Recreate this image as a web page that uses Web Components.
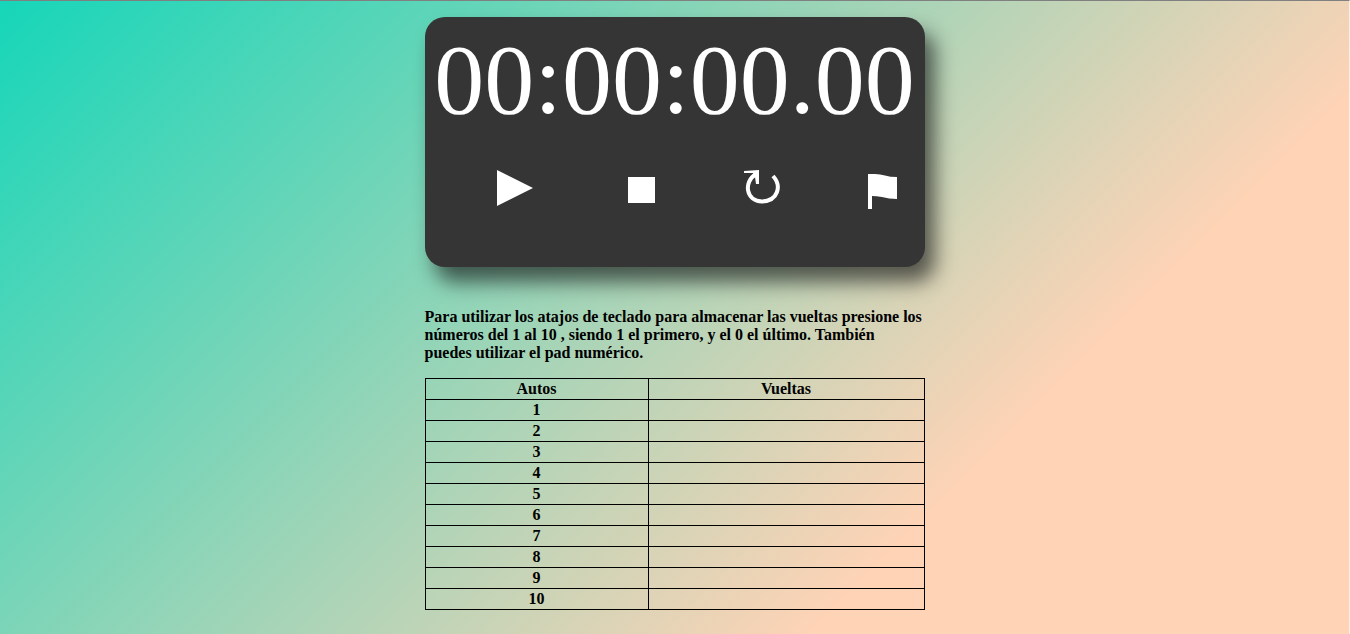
<!DOCTYPE html>
<html lang="es">
<head>
<meta charset="utf-8">
<title>Cronómetro</title>
<style>
html { min-height: 100%; background: linear-gradient(135deg, #16d6b9 0%, #ffd3b6 73%, #ffd3b6 100%); font-family: "Liberation Serif", "Times New Roman", serif; }
body { margin: 0; }
</style>
</head>
<body>
<race-app></race-app>
<script>
class StopWatch extends HTMLElement {
  constructor() {
    super();
    this.attachShadow({ mode: "open" }).innerHTML = `
<style>
:host { display: block; box-sizing: border-box; min-height: 250px; padding-top: 8px; border-radius: 20px; background: #353535; color: #fff; box-shadow: 10px 15px 20px rgba(20, 20, 20, .65); }
time { display: block; font-size: 100px; line-height: 110px; text-align: center; white-space: nowrap; }
nav { display: grid; grid-template-columns: 124px 123px 123px 38px; justify-content: start; padding: 27px 0 0 72px; }
button { all: unset; display: block; width: 38px; height: 56px; cursor: pointer; }
button svg { display: block; fill: currentColor; }
.turn { fill: none; stroke: currentColor; stroke-width: 4; }
</style>
<time><slot></slot></time>
<nav>
<button aria-label="Iniciar"><svg width="38" height="56"><path d="M0 8V44L36 26Z"/></svg></button>
<button aria-label="Detener"><svg width="38" height="56"><path d="M7 15H34V41H7Z"/></svg></button>
<button aria-label="Reiniciar"><svg width="38" height="56"><path d="M0 9L15 8V22H12L11 15L9 11L0 11Z"/><path class="turn" d="M12 12C-1 20 2 39 18 39.500C34 39 38 24 29 14"/></svg></button>
<button aria-label="Vuelta"><svg width="38" height="56"><path d="M1 12H8Q13 12 18 13.500Q23 15 30 15V37Q22 37 15 35Q9 34 5 34V47H1Z"/></svg></button>
</nav>`;
  }
}
customElements.define("stop-watch", StopWatch);

class LapTable extends HTMLElement {
  constructor() {
    super();
    const rows = Array.from({ length: 10 }, (_, i) => `<tr><th scope="row">${i + 1}</th><td></td></tr>`).join("");
    this.attachShadow({ mode: "open" }).innerHTML = `
<style>
:host { display: block; font-size: 16px; line-height: 18px; }
table { width: 100%; border-collapse: collapse; table-layout: fixed; }
col:first-child { width: 223px; }
th, td { border: 1px solid #000; padding: 1px; height: 18px; text-align: center; }
</style>
<table><colgroup><col><col></colgroup>
<thead><tr><th scope="col">Autos</th><th scope="col">Vueltas</th></tr></thead>
<tbody>${rows}</tbody></table>`;
  }
}
customElements.define("lap-table", LapTable);

class RaceApp extends HTMLElement {
  constructor() {
    super();
    this.attachShadow({ mode: "open" }).innerHTML = `
<style>
:host { display: block; box-sizing: border-box; min-height: 100vh; padding: 16px 0 24px; border-top: 1px solid #808080; border-right: 1px solid #fff0e6; }
main { width: 500px; max-width: 100%; margin: 0 auto; }
p { margin: 41px 0 16px; font-size: 16px; line-height: 18px; font-weight: bold; }
</style>
<main>
<stop-watch>00:00:00.00</stop-watch>
<p>Para utilizar los atajos de teclado para almacenar las vueltas presione los números del 1 al 10 , siendo 1 el primero, y el 0 el último. También puedes utilizar el pad numérico.</p>
<lap-table></lap-table>
</main>`;
  }
}
customElements.define("race-app", RaceApp);
</script>
</body>
</html>
